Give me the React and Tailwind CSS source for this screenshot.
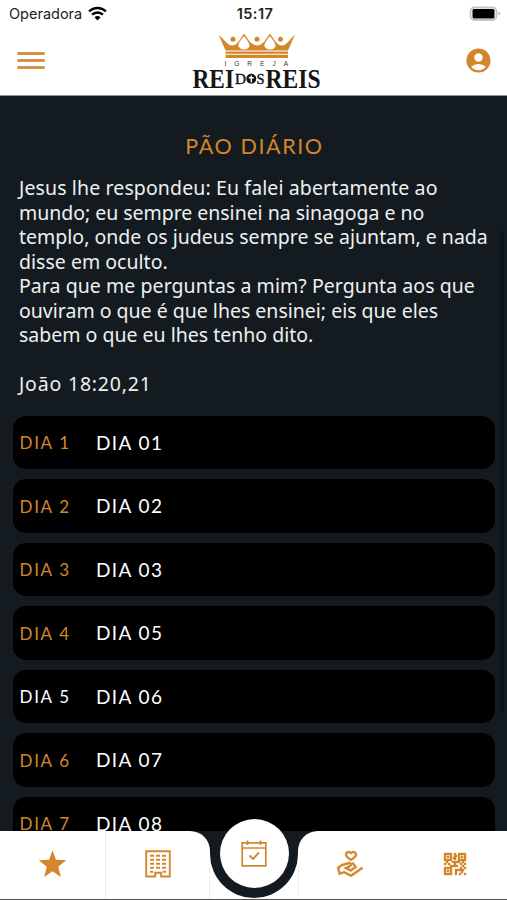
import React from "react";
import { LiaHandHoldingHeartSolid, LiaQrcodeSolid } from "react-icons/lia";
import { MdAccountCircle } from "react-icons/md";

const verse = [
  { text: "Jesus lhe respondeu: Eu falei abertamente ao", track: "tracking-[0.12px]" },
  { text: "mundo; eu sempre ensinei na sinagoga e no", track: "tracking-[-0.03px]" },
  { text: "templo, onde os judeus sempre se ajuntam, e nada", track: "tracking-[0.01px]" },
  { text: "disse em oculto.", track: "tracking-[0.02px]" },
  { text: "Para que me perguntas a mim? Pergunta aos que", track: "tracking-[0.06px]" },
  { text: "ouviram o que é que lhes ensinei; eis que eles", track: "tracking-[0px]" },
  { text: "sabem o que eu lhes tenho dito.", track: "tracking-[0px]" },
  { text: "\u00a0", track: "" },
  { text: "João 18:20,21", track: "tracking-[0.8px]" },
];

const days = [
  { day: "DIA 1", title: "DIA 01" },
  { day: "DIA 2", title: "DIA 02" },
  { day: "DIA 3", title: "DIA 03" },
  { day: "DIA 4", title: "DIA 05" },
  { day: "DIA 5", title: "DIA 06", active: true },
  { day: "DIA 6", title: "DIA 07" },
  { day: "DIA 7", title: "DIA 08" },
];

function StatusBar() {
  return (
    <div className="grid h-[27px] grid-cols-3 items-center pl-[9px] pr-[6px] font-['Inter'] text-[#222]">
      <div className="flex items-center gap-[6px]">
        <span className="text-[14.5px] tracking-[0px]">Operadora</span>
        <svg width="19" height="15" viewBox="0 0 19 15" fill="none" stroke="#000" strokeWidth="2.4">
          <path d="M1.1 5.4a11.9 11.9 0 0 1 16.8 0" />
          <path d="M4.1 8.7a7.6 7.6 0 0 1 10.8 0" />
          <path d="M6.5 11.3a4.2 4.2 0 0 1 6 0L9.5 14.4z" fill="#000" stroke="none" />
        </svg>
      </div>
      <span className="text-center text-[14.5px] font-semibold tracking-[0.4px]">15:17</span>
      <svg className="justify-self-end" width="32" height="16" viewBox="0 0 32 16">
        <rect x="1.500" y="1.500" width="26" height="12.500" rx="4" fill="#fff" stroke="#c4c4c4" strokeWidth="1.8" />
        <rect x="3.500" y="3" width="22" height="9.500" rx="1.5" fill="#000" />
        <path d="M29.5 5.5c2 .8 2 3.2 0 4z" fill="#aaa" />
      </svg>
    </div>
  );
}

function Logo() {
  return (
    <svg width="132" height="64" viewBox="0 0 132 64">
      <g fill="#d4862c">
        <path d="M26.500 2.500L35 11Q41 17 47 9L52 1.500L58 10Q65 17 72 10L78 1.500L83 9Q89 17 95 11L103 2.500L96 18.500H33.500Z" />
        <path d="M33.500 19.500H96V21.700H33.500zM33.500 22.700H96V26H33.500z" />
        <circle cx="41" cy="7.2" r="2.5" />
        <circle cx="65" cy="7.2" r="2.5" />
        <circle cx="88.500" cy="7.2" r="2.500" />
      </g>
      <path
        d="M52 4Q45.500 11.500 46.500 14.500Q48.500 17.500 52 17.500Q56 17.500 57.500 14.500Q58 11.500 52 4M78 4Q71.500 11.500 72.500 14.500Q74.500 17.500 78 17.500Q82 17.500 83.500 14.500Q84 11.500 78 4"
        fill="#fff"
      />
      <text x="32.500" y="33.800" fontSize="6.500" fontFamily="Liberation Sans" fill="#333" letterSpacing="8">
        IGREJA
      </text>
      <g fontFamily="Liberation Serif" fontWeight="700" fill="#151515">
        <text x="0.500" y="55.600" fontSize="26.5" textLength="41.500" lengthAdjust="spacingAndGlyphs">REI</text>
        <text x="43" y="51.500" fontSize="14" fontWeight="400" stroke="#151515" strokeWidth="0.4" textLength="11" lengthAdjust="spacingAndGlyphs">D</text>
        <text x="64.500" y="51.500" fontSize="14" fontWeight="400" stroke="#151515" strokeWidth="0.4" textLength="8" lengthAdjust="spacingAndGlyphs">S</text>
        <text x="73.500" y="55.600" fontSize="26.5" textLength="55" lengthAdjust="spacingAndGlyphs">REIS</text>
      </g>
      <circle cx="59.300" cy="46.800" r="5" fill="#151515" />
      <path d="M59.300 43.500V50.500M56.800 45.800H61.800" stroke="#fff" strokeWidth="1.400" />
    </svg>
  );
}

function Header() {
  return (
    <header className="h-24 shrink-0 border-b border-[#8b8d8f] bg-white">
      <StatusBar />
      <div className="flex h-[68px] justify-between pl-[17px] pr-[14px]">
        <div className="flex w-[42px] flex-col gap-[4.3px] pt-[25px]">
          <span className="h-[2.7px] w-7 rounded-full bg-[#d3914a]" />
          <span className="h-[2.7px] w-7 rounded-full bg-[#d3914a]" />
          <span className="h-[2.7px] w-7 rounded-full bg-[#d3914a]" />
        </div>
        <div className="-mr-[18px] pt-[5px]">
          <Logo />
        </div>
        <div className="flex w-[54px] justify-end pt-[19px]">
          <MdAccountCircle className="size-[29px] text-[#d4862c]" />
        </div>
      </div>
    </header>
  );
}

function BuildingIcon() {
  return (
    <svg width="26" height="28" viewBox="0 0 26 28" fill="none" stroke="currentColor">
      <path d="M1.200 1.200H24.800V26.500H16.200V22.800H10.200V26.500H1.200Z" strokeWidth="1.900" />
      <path d="M5 5.800H21M5 9.800H21M5 13.800H21M5 17.800H21" strokeWidth="2" strokeDasharray="4 2" />
      <path d="M5 21.800H8.200M17.800 21.800H21" strokeWidth="2" />
    </svg>
  );
}

function CalendarIcon() {
  return (
    <svg width="26" height="27" viewBox="0 0 26 27" fill="none" stroke="currentColor" strokeWidth="1.700">
      <path d="M1.200 2.800H24.800V25.800H1.200ZM1.200 8H24.800" />
      <path d="M6.500 0.500V5M19.500 0.500V5" strokeWidth="1.800" />
      <path d="M8.500 15.500L12 19L18 12.500" strokeWidth="1.900" />
    </svg>
  );
}

function DayRow({ day, title, active }) {
  return (
    <li className="flex h-[53.5px] shrink-0 items-center rounded-[13px] bg-black pl-[6.5px] pt-[1.5px] font-['Lato']">
      <span className={`w-[76.5px] text-[17px] tracking-[1.7px] ${active ? "text-white" : "text-[#d4862c]"}`}>
        {day}
      </span>
      <span className="text-[19px] tracking-[1.4px] text-white">{title}</span>
    </li>
  );
}

function TabBar() {
  return (
    <nav className="relative flex h-[69px] shrink-0 border-b border-[#4c4f52] bg-[#141b20] text-[#d4862c]">
      <div className="flex w-[210px] rounded-tr-[20px] bg-white">
        <a className="flex w-[106px] items-center justify-center border-r border-[#eee] pb-[2px]">
          <svg width="29" height="28" viewBox="0 0 28 28" fill="currentColor">
            <path d="M14 0.500l3.500 9.300 10.200.5-8 6.400 2.700 10.300L14 21.300 5.600 27l2.700-10.300-8-6.400 10.200-.5z" />
          </svg>
        </a>
        <a className="flex flex-1 items-center justify-center pb-[2px]">
          <BuildingIcon />
        </a>
        <span className="h-8 w-px self-end bg-[#eee]" />
      </div>
      <div className="w-[88px] bg-white">
        <div className="h-[67px] rounded-b-full bg-[#141b20]" />
      </div>
      <div className="flex flex-1 rounded-tl-[20px] bg-white">
        <span className="h-8 w-px self-end bg-[#eee]" />
        <a className="flex w-[102px] items-center justify-center pb-[2px]">
          <LiaHandHoldingHeartSolid className="size-8" stroke="currentColor" strokeWidth="0.4" />
        </a>
        <a className="flex flex-1 items-center justify-center pb-[2px] pl-[1px]">
          <LiaQrcodeSolid className="size-8" stroke="currentColor" strokeWidth="0.4" />
        </a>
      </div>
      {/* raised center button */}
      <a className="absolute -top-[12px] left-[219.5px] flex size-[69px] items-center justify-center rounded-full bg-white">
        <CalendarIcon />
      </a>
    </nav>
  );
}

export default function App() {
  return (
    <div className="flex h-[900px] w-[507px] flex-col overflow-hidden bg-[#141b20]">
      <Header />
      <main className="relative min-h-0 flex-1 overflow-hidden">
        <h1 className="pl-[2px] pt-[35px] text-center font-['Lato'] text-[21.5px] leading-[30px] tracking-[1.6px] text-[#d4862c]">
          PÃO DIÁRIO
        </h1>
        <div className="pl-[19px] pt-[15px] font-['Noto_Sans'] text-[19.5px] leading-[24.5px] text-[#eef0f1]">
          {verse.map((line, i) => (
            <p key={i} className={`w-fit whitespace-nowrap ${line.track}`}>
              {line.text}
            </p>
          ))}
        </div>
        <ul className="flex flex-col gap-[10px] pl-[13px] pr-3 pt-[19px]">
          {days.map((d) => (
            <DayRow key={d.day} {...d} />
          ))}
        </ul>
        {/* scroll indicator */}
        <div className="absolute right-[3px] top-[135px] h-[482px] w-1 rounded-full bg-[#0e1318]" />
      </main>
      <TabBar />
    </div>
  );
}
